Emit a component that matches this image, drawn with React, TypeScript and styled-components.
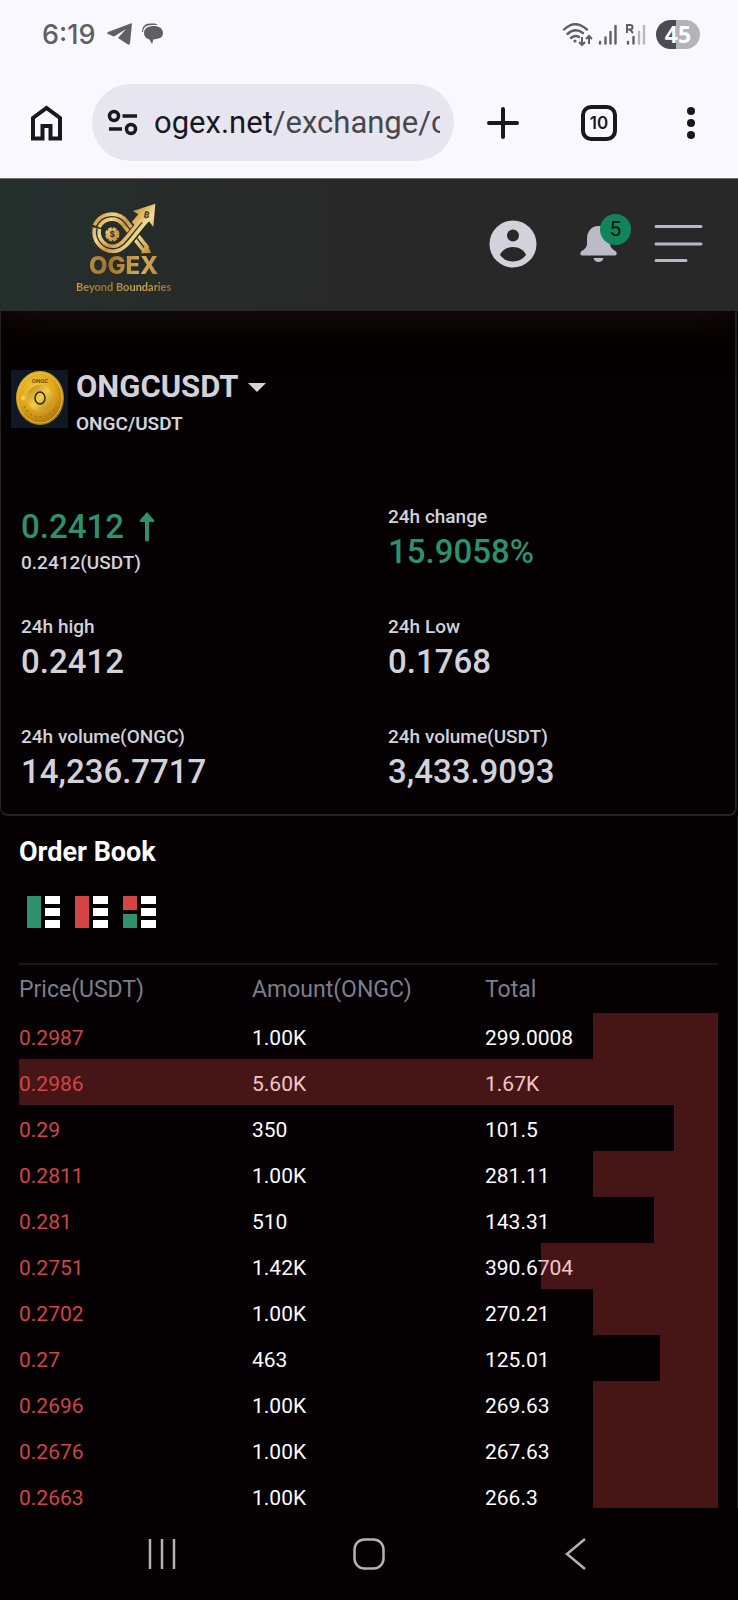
import React from "react";
import styled, { createGlobalStyle } from "styled-components";

const palette = {
  chrome: "#f9f8ff",
  chrome_pill: "#e7e5ef",
  chrome_text: "#18181d",
  chrome_gray: "#5f5f65",
  header: "#282828",
  page: "#050001",
  line: "#242122",
  text: "#d1d2da",
  muted: "#7c7f8a",
  green: "#2f916b",
  red: "#cf4545",
  white: "#fdfdfd",
};

const GlobalStyle = createGlobalStyle`
  * {
    box-sizing: border-box;
  }
  body {
    margin: 0;
    background-color: ${palette.page};
    font-family: Roboto, "Liberation Sans", sans-serif;
  }
  button {
    padding: 0;
    border: 0;
    background: none;
    font-family: inherit;
    color: inherit;
    cursor: pointer;
  }
  svg {
    display: block;
    flex: none;
  }
`;

const Screen = styled.div`
  display: flex;
  flex-direction: column;
  height: 100vh;
`;

const StatusBar = styled.div`
  position: relative;
  z-index: 1;
  flex: none;
  display: flex;
  align-items: center;
  justify-content: space-between;
  height: 70px;
  padding: 0 38px 2px 42px;
  background-color: ${palette.chrome};
  color: ${palette.chrome_gray};

  .status-side {
    display: flex;
    align-items: center;
    gap: 8px;
  }
  .status-time {
    margin-right: 4px;
    font-family: Inter, Roboto, sans-serif;
    font-size: 27px;
    font-weight: 500;
  }
`;

const Battery = styled.span`
  width: 44px;
  height: 29px;
  border-radius: 15px;
  background: linear-gradient(90deg, #4c4c50 45%, #b4b3b9 45%);
  color: white;
  font-family: "Open Sans", sans-serif;
  font-size: 23px;
  font-weight: 700;
  line-height: 29px;
  text-align: center;
`;

const BrowserBar = styled.div`
  position: relative;
  z-index: 1;
  flex: none;
  display: flex;
  align-items: center;
  height: 109px;
  padding: 0 34px 3px 29px;
  border-bottom: 1px solid #6d6d72;
  background-color: ${palette.chrome};
  color: ${palette.chrome_text};

  .browser-actions {
    display: flex;
    align-items: center;
    gap: 61px;
    flex: none;
    margin-left: 32px;
  }
`;

const AddressButton = styled.button`
  display: flex;
  align-items: center;
  flex: 1;
  min-width: 0;
  height: 77px;
  margin-left: 28px;
  padding: 0 14px 0 15px;
  border-radius: 39px;
  background-color: ${palette.chrome_pill};

  .address-text {
    flex: 1;
    margin-left: 16px;
    overflow: hidden;
    white-space: nowrap;
    text-align: left;
    font-size: 31px;
    line-height: 44px;
    color: #47464d;
  }
  b {
    font-weight: 400;
    color: ${palette.chrome_text};
  }
`;

const TabsButton = styled.button`
  width: 36px;
  height: 36px;
  border: 4px solid ${palette.chrome_text};
  border-radius: 10px;
  font-family: Inter, sans-serif;
  font-size: 17px;
  font-weight: 600;
  line-height: 28px;
`;

const Header = styled.header`
  position: relative;
  flex: none;
  display: flex;
  align-items: center;
  justify-content: space-between;
  height: 132px;
  padding: 0 35px 2px 76px;
  background: linear-gradient(90deg, #25302d, ${palette.header} 45%);
  box-shadow: 0 4px 40px rgba(40, 28, 28, 0.6);

  .header-actions {
    display: flex;
    align-items: center;
    gap: 37px;
    color: ${palette.text};
  }
`;

const Logo = styled.a`
  display: flex;
  flex-direction: column;
  align-items: center;
  margin-top: 6px;
  text-decoration: none;
  font-family: Inter, sans-serif;
  background: linear-gradient(100deg, #d3a950, #a2722d 40%, #d9ad55 70%, #96692c);
  background-clip: text;
  color: transparent;

  strong {
    font-size: 24px;
    font-weight: 800;
    line-height: 22px;
  }
  small {
    margin-top: 3px;
    font-family: Lato, sans-serif;
    font-size: 11px;
    font-weight: 700;
    line-height: 14px;
  }
`;

const BellButton = styled.button`
  position: relative;
  margin-left: 6px;

  span {
    position: absolute;
    top: -11px;
    right: -14px;
    width: 31px;
    height: 31px;
    border-radius: 50%;
    background-color: #11845b;
    color: #06140e;
    font-size: 21px;
    line-height: 31px;
  }
`;

const Content = styled.main`
  flex: 1;
  min-height: 0;
  overflow-y: auto;
  scrollbar-width: none;
`;

const MarketCard = styled.section`
  padding: 55px 0 19px;
  margin-right: 1px;
  border: 2px solid ${palette.line};
  border-top: 0;
  border-left-width: 1px;
  border-radius: 0 0 8px 8px;
  color: ${palette.text};
`;

const Pair = styled.div`
  display: flex;
  gap: 8px;
  padding-left: 10px;

  .coin {
    margin-top: 4px;
  }
  .pair-name {
    display: flex;
    align-items: center;
    gap: 9px;
    font-size: 31px;
    font-weight: 700;
    line-height: 42px;
  }
  .pair-symbol {
    margin: 0;
    font-size: 19px;
    font-weight: 600;
    line-height: 32px;
  }
`;

const Stats = styled.dl`
  display: grid;
  grid-template-columns: 1fr 1fr;
  row-gap: 39px;
  margin: 64px 0 0;
`;

const Stat = styled.div<{ $reverse?: boolean }>`
  display: flex;
  flex-direction: ${({ $reverse }) => ($reverse ? "column-reverse" : "column")};
  padding-left: 20px;

  dt {
    font-size: 19px;
    font-weight: 500;
    line-height: 25px;
  }
`;

const StatValue = styled.dd<{ $up?: boolean }>`
  display: flex;
  align-items: center;
  gap: 15px;
  margin: 0;
  font-size: 33px;
  font-weight: 500;
  line-height: 46px;
  color: ${({ $up }) => ($up ? palette.green : palette.text)};
`;

const OrderBook = styled.section`
  padding: 17px 19px 0;
  border-right: 1px solid ${palette.line};
  color: ${palette.white};

  h2 {
    margin: 0;
    font-size: 27px;
    font-weight: 700;
    line-height: 38px;
  }
`;

const BookModes = styled.div`
  display: flex;
  gap: 15px;
  padding: 25px 8px 35px;
`;

const BookTable = styled.table`
  width: 100%;
  table-layout: fixed;
  border-collapse: collapse;
  border-top: 2px solid #191617;

  th {
    height: 49px;
    padding: 0;
    text-align: left;
    font-size: 23px;
    font-weight: 400;
    color: ${palette.muted};
  }
  tbody tr {
    position: relative;
  }
  td {
    height: 46px;
    padding: 4px 0 0;
    font-size: 21px;
  }
  .price {
    color: ${palette.red};
  }
`;

const DepthBar = styled.span`
  position: absolute;
  top: 0;
  right: 0;
  bottom: 0;
  background-color: rgba(223, 68, 70, 0.3);
`;

const SystemNav = styled.nav`
  flex: none;
  display: grid;
  grid-template-columns: repeat(3, 1fr);
  align-items: center;
  justify-items: center;
  height: 92px;
  padding: 0 59px;
  background-color: ${palette.page};
`;

const stats = [
  { label: "0.2412(USDT)", value: "0.2412", up: true, last: true },
  { label: "24h change", value: "15.9058%", up: true },
  { label: "24h high", value: "0.2412" },
  { label: "24h Low", value: "0.1768" },
  { label: "24h volume(ONGC)", value: "14,236.7717" },
  { label: "24h volume(USDT)", value: "3,433.9093" },
];

const asks = [
  { price: "0.2987", amount: 1000, total: "299.0008" },
  { price: "0.2986", amount: 5600, total: "1.67K" },
  { price: "0.29", amount: 350, total: "101.5" },
  { price: "0.2811", amount: 1000, total: "281.11" },
  { price: "0.281", amount: 510, total: "143.31" },
  { price: "0.2751", amount: 1420, total: "390.6704" },
  { price: "0.2702", amount: 1000, total: "270.21" },
  { price: "0.27", amount: 463, total: "125.01" },
  { price: "0.2696", amount: 1000, total: "269.63" },
  { price: "0.2676", amount: 1000, total: "267.63" },
  { price: "0.2663", amount: 1000, total: "266.3" },
];

const maxAmount = Math.max(...asks.map((ask) => ask.amount));

const formatAmount = (amount: number) =>
  amount >= 1000 ? `${(amount / 1000).toFixed(2)}K` : `${amount}`;

const StatusIcons: React.FC = () => (
  <svg width="86" height="26" viewBox="0 0 86 26" fill="none" stroke="currentColor">
    {/* wifi */}
    <g strokeWidth="2.4" strokeLinecap="round">
      <path d="M2 8.5Q13 -2 25 8.5" />
      <path d="M5.5 13Q13 6 21 12" />
      <path d="M9 17Q13 13.5 17 16" />
    </g>
    <circle cx="13" cy="20" r="1.6" fill="currentColor" stroke="none" />
    <path strokeWidth="2" d="M20 16v8m-3-3 3 3 3-3M27 23v-8m-3 3 3-3 3 3" />
    {/* first sim */}
    <path strokeWidth="2.4" strokeLinecap="round" d="M38 21v1.5M43.5 16.5v6M48.5 11v11.5M53.5 5v17.5" />
    {/* second sim, roaming */}
    <path strokeWidth="2.4" strokeLinecap="round" d="M66 21v1.5M71.5 16v6.5" />
    <path strokeWidth="2.4" strokeLinecap="round" stroke="#b9b8be" d="M77 11v11.5M82 5v17.5" />
    <path strokeWidth="2" d="M65 12V4h3q2.5 0 2.5 2.2T68 8.5h-3m3 0 3 3.5" />
  </svg>
);

const LogoMark: React.FC = () => (
  <svg width="70" height="55" viewBox="255 80 210 165" fill="none">
    <defs>
      <linearGradient id="gold" gradientUnits="userSpaceOnUse" x1="270" y1="120" x2="440" y2="240">
        <stop offset="0" stopColor="#c08a35" />
        <stop offset=".25" stopColor="#f3d489" />
        <stop offset=".45" stopColor="#c9953d" />
        <stop offset=".7" stopColor="#f6dc92" />
        <stop offset="1" stopColor="#b9852f" />
      </linearGradient>
    </defs>
    <path d="M300 224A50 50 0 1 1 362 148L426 229" stroke="url(#gold)" strokeWidth="26" />
    <path d="M300 224A50 50 0 1 1 362 148L428 232" stroke="#272d2b" strokeWidth="4" />
    <path d="M411 240L441 239L428 208Z" fill="url(#gold)" />
    <path d="M281 160A50 50 0 0 0 333 229C362 224 372 198 428 132" stroke="#272d2b" strokeWidth="34" />
    <path d="M279 165A50 50 0 0 0 333 226C362 221 372 195 430 129" stroke="url(#gold)" strokeWidth="26" />
    <path d="M279 165A50 50 0 0 0 333 226C362 221 372 195 419 142" stroke="#272d2b" strokeWidth="4" />
    <path d="M454 91L387 113L403 123L383 146L394 157L405 145L426 150L435 144L448 161Z" fill="url(#gold)" />
    <circle cx="325" cy="183" r="17" fill="url(#gold)" />
    <circle cx="325" cy="183" r="18" stroke="url(#gold)" strokeWidth="7" strokeDasharray="11 3" />
    <text x="325" y="191" textAnchor="middle" fontSize="23" fontWeight="700" fill="#272d2b">$</text>
    <text x="428" y="133" textAnchor="middle" fontSize="25" fontWeight="700" fill="#272d2b" transform="rotate(14 428 125)">₿</text>
  </svg>
);

const Coin: React.FC = () => (
  <svg className="coin" width="57" height="58" viewBox="0 0 57 58">
    <defs>
      <radialGradient id="coin" cx=".42" cy=".35" r=".65">
        <stop offset="0" stopColor="#f2cb3c" />
        <stop offset=".6" stopColor="#dca51d" />
        <stop offset="1" stopColor="#a97210" />
      </radialGradient>
      <linearGradient id="boss" x1="0" y1="0" x2="1" y2="1">
        <stop offset="0" stopColor="#b98213" />
        <stop offset=".5" stopColor="#f0cc48" />
        <stop offset="1" stopColor="#b57c12" />
      </linearGradient>
    </defs>
    <rect width="57" height="58" fill="#101725" />
    <ellipse cx="29" cy="28" rx="24" ry="27" fill="url(#coin)" />
    <ellipse cx="29" cy="28" rx="22" ry="25" fill="none" stroke="#edc43c" />
    <path d="M13 36Q19 47 29 47T45 36" fill="none" stroke="#a8750f" strokeDasharray="2 3" strokeWidth="1.5" />
    <circle cx="29" cy="28" r="13" fill="url(#boss)" />
    <ellipse cx="29" cy="28" rx="5" ry="6" fill="none" stroke="#2b2a12" strokeWidth="1.5" />
    <circle cx="12" cy="28" r="2" fill="#ffd84d" />
    <circle cx="46" cy="28" r="2" fill="#e78c16" />
    <text x="29" y="13" textAnchor="middle" fontSize="6" fontWeight="500" fill="#50390a">ONGC</text>
  </svg>
);

const ModeIcon: React.FC<{ top: string; bottom?: string }> = ({ top, bottom }) => (
  <svg width="33" height="32" viewBox="0 0 33 32">
    <path d={bottom ? "M0 0h14v14H0z" : "M0 0h14v32H0z"} fill={top} />
    {bottom && <path d="M0 18h14v14H0z" fill={bottom} />}
    <path d="M18 0h15v8H18zM18 12h15v8H18zM18 24h15v8H18z" fill="#fff" />
  </svg>
);

const App: React.FC = () => (
  <Screen>
    <GlobalStyle />
    <StatusBar>
      <div className="status-side">
        <span className="status-time">6:19</span>
        <svg width="26" height="22" viewBox="0 0 26 22" fill="currentColor">
          <path d="M25 0 1 9q-1.5 1 0 2l6 2.5L19 6l-8 9 10 6.5q1.5 .5 2-1z" />
        </svg>
        <svg width="23" height="22" viewBox="0 0 23 22" fill="currentColor">
          <path d="M12.5 3C18 3 22 5.500 22 10s-3.500 6-9.500 6.300L11 21l-2.500-4.500Q3 15 3 10c0-4.500 4-7 9.500-7z" />
          <path d="M1 9Q1 .5 9 .5h5l3 1.500H10Q2.500 2 2 9z" />
        </svg>
      </div>
      <div className="status-side">
        <StatusIcons />
        <Battery>45</Battery>
      </div>
    </StatusBar>
    <BrowserBar>
      <button type="button" aria-label="Home">
        <svg width="35" height="38" viewBox="0 0 35 38" fill="none" stroke="currentColor" strokeWidth="4">
          <path d="M4 34.5V14L17.5 4 31 14v20.5h-9.500V22h-8v12.500z" />
        </svg>
      </button>
      <AddressButton type="button">
        <svg width="31" height="27" viewBox="0 0 31 27" fill="none" stroke="currentColor" strokeWidth="3.5">
          <circle cx="7" cy="7" r="4.5" />
          <path d="M15.5 7H30M2 20h13" />
          <circle cx="24" cy="20" r="4.5" />
        </svg>
        <span className="address-text">
          <b>ogex.net</b>/exchange/c
        </span>
      </AddressButton>
      <div className="browser-actions">
        <button type="button" aria-label="New tab">
          <svg width="34" height="34" viewBox="0 0 34 34" stroke="currentColor" strokeWidth="4" strokeLinecap="round">
            <path d="M17 3v28M3 17h28" />
          </svg>
        </button>
        <TabsButton type="button">10</TabsButton>
        <button type="button" aria-label="More">
          <svg width="26" height="32" viewBox="0 0 26 32" fill="currentColor">
            <circle cx="13" cy="4" r="4" />
            <circle cx="13" cy="16" r="4" />
            <circle cx="13" cy="28" r="4" />
          </svg>
        </button>
      </div>
    </BrowserBar>
    <Header>
      <Logo href="#">
        <LogoMark />
        <strong>OGEX</strong>
        <small>Beyond Boundaries</small>
      </Logo>
      <div className="header-actions">
        <button type="button" aria-label="Account">
          <svg width="48" height="48" viewBox="0 0 48 48" fill="currentColor">
            <circle cx="24" cy="24" r="23.5" />
            <circle cx="24" cy="15.5" r="6" fill={palette.header} />
            <path d="M11 35c2-5 7-8 13-8s11 3 13 8q-5 6.500-13 6.500T11 35z" fill={palette.header} />
          </svg>
        </button>
        <BellButton type="button" aria-label="Notifications">
          <svg width="37" height="38" viewBox="0 0 37 38" fill="#babac9">
            <path d="M18.5 1C11 1 7 7 7 14v5q0 4-6 7.500Q-1 30 2 30.500h33q3-.5 1-4Q30 23 30 19v-5C30 7 26 1 18.500 1z" />
            <path d="M13.5 33h10q-1 4-5 4t-5-4z" />
          </svg>
          <span>5</span>
        </BellButton>
        <button type="button" aria-label="Menu">
          <svg width="49" height="40" viewBox="0 0 49 40" stroke="#b5b8d2" strokeWidth="3" strokeLinecap="round">
            <path d="M2 2.5h45M2 20h45M2 36.5h30" />
          </svg>
        </button>
      </div>
    </Header>
    <Content>
      <MarketCard>
        <Pair>
          <Coin />
          <div>
            <button type="button" className="pair-name">
              ONGCUSDT
              <svg width="18" height="9" viewBox="0 0 18 9" fill="currentColor">
                <path d="M0 0h18L9 9z" />
              </svg>
            </button>
            <p className="pair-symbol">ONGC/USDT</p>
          </div>
        </Pair>
        <Stats>
          {stats.map((stat) => (
            <Stat key={stat.label} $reverse={stat.last}>
              <dt>{stat.label}</dt>
              <StatValue $up={stat.up}>
                {stat.value}
                {stat.last && (
                  <svg width="16" height="30" viewBox="0 0 16 30" fill="currentColor">
                    <path d="M8 0l7 8q1 2-1 2h-4v18q0 1.5-2 1.5T6 28V10H2q-2 0-1-2z" />
                  </svg>
                )}
              </StatValue>
            </Stat>
          ))}
        </Stats>
      </MarketCard>
      <OrderBook>
        <h2>Order Book</h2>
        <BookModes>
          <button type="button" aria-label="Bids">
            <ModeIcon top={palette.green} />
          </button>
          <button type="button" aria-label="Asks">
            <ModeIcon top="#d74444" />
          </button>
          <button type="button" aria-label="Bids and asks">
            <ModeIcon top="#d74444" bottom={palette.green} />
          </button>
        </BookModes>
        <BookTable>
          <thead>
            <tr>
              <th>Price(USDT)</th>
              <th>Amount(ONGC)</th>
              <th>Total</th>
            </tr>
          </thead>
          <tbody>
            {asks.map((ask) => (
              <tr key={ask.price}>
                <td className="price">{ask.price}</td>
                <td>{formatAmount(ask.amount)}</td>
                <td>
                  {ask.total}
                  <DepthBar style={{ width: `${(ask.amount / maxAmount) * 100}%` }} />
                </td>
              </tr>
            ))}
          </tbody>
        </BookTable>
      </OrderBook>
    </Content>
    <SystemNav>
      <button type="button" aria-label="Recent apps">
        <svg width="30" height="32" viewBox="0 0 30 32" stroke="#b5b1b1" strokeWidth="2.5">
          <path d="M3 1v30M15 1v30M27 1v30" />
        </svg>
      </button>
      <button type="button" aria-label="Home screen">
        <svg width="32" height="32" viewBox="0 0 32 32" fill="none" stroke="#b5b1b1" strokeWidth="2.5">
          <rect x="1.5" y="1.5" width="29" height="29" rx="10" />
        </svg>
      </button>
      <button type="button" aria-label="Back">
        <svg width="24" height="32" viewBox="0 0 24 32" fill="none" stroke="#b5b1b1" strokeWidth="2.5">
          <path d="M21 1 3 16l18 15" />
        </svg>
      </button>
    </SystemNav>
  </Screen>
);

export default App;
